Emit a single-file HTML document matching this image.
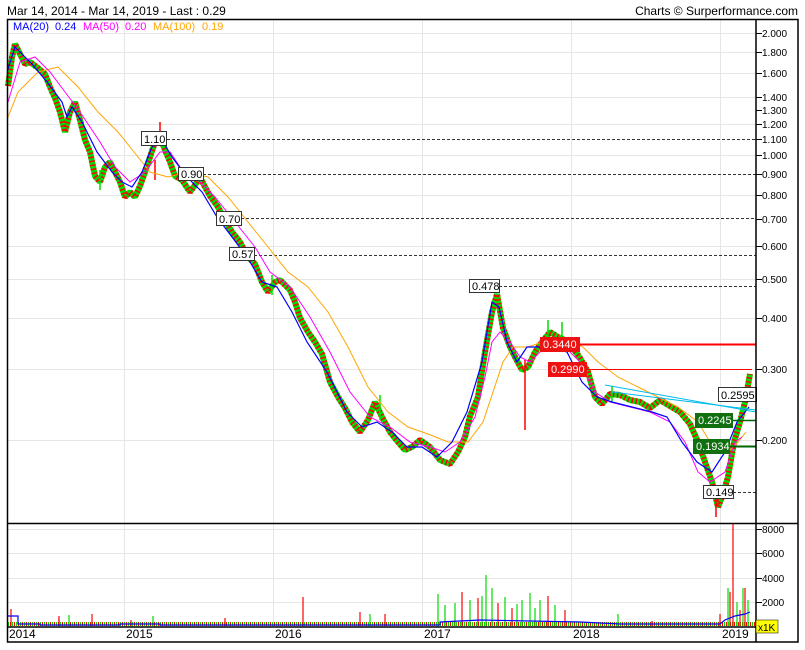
<!DOCTYPE html>
<html><head><meta charset="utf-8"><style>
html,body{margin:0;padding:0;background:#fff;width:805px;height:650px;overflow:hidden}
svg{display:block;font-family:"Liberation Sans",sans-serif}
</style></head><body>
<svg width="805" height="650" viewBox="0 0 805 650" xmlns="http://www.w3.org/2000/svg">
<rect width="805" height="650" fill="#fff"/>
<text x="7" y="15" font-size="12" fill="#000">Mar 14, 2014 - Mar 14, 2019 - Last : 0.29</text>
<text x="798" y="15" font-size="12" fill="#000" text-anchor="end">Charts © Surperformance.com</text>
<g stroke="#e6e6e6" stroke-width="1">
<line x1="124.5" y1="20" x2="124.5" y2="627"/><line x1="273.5" y1="20" x2="273.5" y2="627"/>
<line x1="422.5" y1="20" x2="422.5" y2="627"/><line x1="571.5" y1="20" x2="571.5" y2="627"/>
<line x1="720.5" y1="20" x2="720.5" y2="627"/>
<line x1="8" y1="33.5" x2="756" y2="33.5"/><line x1="8" y1="52.5" x2="756" y2="52.5"/>
<line x1="8" y1="73.5" x2="756" y2="73.5"/><line x1="8" y1="97.5" x2="756" y2="97.5"/>
<line x1="8" y1="124.5" x2="756" y2="124.5"/><line x1="8" y1="155.5" x2="756" y2="155.5"/>
<line x1="8" y1="195.5" x2="756" y2="195.5"/><line x1="8" y1="246.5" x2="756" y2="246.5"/>
<line x1="8" y1="279.5" x2="756" y2="279.5"/><line x1="8" y1="318.5" x2="756" y2="318.5"/>
<line x1="8" y1="369.5" x2="756" y2="369.5"/><line x1="8" y1="440.5" x2="756" y2="440.5"/>
<line x1="8" y1="529.5" x2="756" y2="529.5"/><line x1="8" y1="553.5" x2="756" y2="553.5"/>
<line x1="8" y1="578.5" x2="756" y2="578.5"/><line x1="8" y1="602.5" x2="756" y2="602.5"/>
</g>
<g stroke="#333" stroke-dasharray="3,2" stroke-width="1">
<line x1="167" y1="139.5" x2="756" y2="139.5"/><line x1="203" y1="174.5" x2="756" y2="174.5"/>
<line x1="241" y1="218.5" x2="756" y2="218.5"/><line x1="254" y1="255.5" x2="756" y2="255.5"/>
<line x1="499" y1="286.5" x2="756" y2="286.5"/><line x1="733" y1="492.5" x2="756" y2="492.5"/>
</g>
<!-- price -->
<g fill="none" transform="translate(0,2)" stroke-linejoin="bevel">
<polyline stroke="#00dd00" stroke-width="6" points="8,84 12,55 15,42 20,52 25,62 30,60 38,66 45,72 50,85 55,96 60,110 65,130 70,110 75,100 80,118 85,138 90,150 95,174 100,180 105,165 110,160 115,170 120,180 125,195 130,190 135,195 140,184 145,170 150,155 155,140 160,135 165,148 170,160 175,174 182,178 190,190 195,183 200,175 205,185 210,194 218,205 225,218 232,230 240,240 248,255 255,262 262,280 268,290 275,280 280,278 290,288 295,300 300,316 308,330 315,340 322,352 330,380 338,395 345,406 352,420 360,430 368,418 375,400 382,415 390,430 398,440 405,448 412,445 420,438 430,445 440,458 450,462 458,450 465,435 470,414 478,395 485,350 492,310 497,292 503,326 510,345 515,355 522,368 528,365 535,350 542,340 550,330 558,335 565,338 572,345 580,356 588,370 595,395 602,402 610,392 620,393 630,398 640,400 650,406 660,398 670,404 680,410 690,422 698,440 705,460 712,480 718,505 722,495 728,475 734,440 740,420 745,400 750,372"/>
<polyline stroke="#ff0000" stroke-width="6" stroke-dasharray="1.5,2.5" points="8,84 12,55 15,42 20,52 25,62 30,60 38,66 45,72 50,85 55,96 60,110 65,130 70,110 75,100 80,118 85,138 90,150 95,174 100,180 105,165 110,160 115,170 120,180 125,195 130,190 135,195 140,184 145,170 150,155 155,140 160,135 165,148 170,160 175,174 182,178 190,190 195,183 200,175 205,185 210,194 218,205 225,218 232,230 240,240 248,255 255,262 262,280 268,290 275,280 280,278 290,288 295,300 300,316 308,330 315,340 322,352 330,380 338,395 345,406 352,420 360,430 368,418 375,400 382,415 390,430 398,440 405,448 412,445 420,438 430,445 440,458 450,462 458,450 465,435 470,414 478,395 485,350 492,310 497,292 503,326 510,345 515,355 522,368 528,365 535,350 542,340 550,330 558,335 565,338 572,345 580,356 588,370 595,395 602,402 610,392 620,393 630,398 640,400 650,406 660,398 670,404 680,410 690,422 698,440 705,460 712,480 718,505 722,495 728,475 734,440 740,420 745,400 750,372"/>
</g>
<g stroke="#ff0000" stroke-width="1.5"><line x1="160" y1="122" x2="160" y2="140"/><line x1="525" y1="360" x2="525" y2="430"/><line x1="716" y1="495" x2="716" y2="517"/><line x1="155" y1="160" x2="155" y2="180"/></g>
<g stroke="#00dd00" stroke-width="1.5"><line x1="100" y1="170" x2="100" y2="190"/><line x1="272" y1="275" x2="272" y2="295"/><line x1="380" y1="395" x2="380" y2="420"/><line x1="548" y1="320" x2="548" y2="345"/><line x1="562" y1="322" x2="562" y2="345"/><line x1="612" y1="386" x2="612" y2="402"/></g>
<!-- MAs -->
<g fill="none" transform="translate(0,2)">
<polyline stroke="#ffa500" stroke-width="1" transform="translate(38,0)" points="-30,115 -20,90 0,70 20,65 40,85 60,110 80,130 100,155 112,170 130,175 150,170 170,175 190,195 210,220 230,245 250,270 270,285 290,310 310,345 330,385 350,410 370,425 390,432 410,440 430,440 445,420 455,390 465,360 475,345 490,345 510,338 530,338 545,345 560,360 580,375 600,385 620,395 640,405 660,420 675,445 690,450 700,440 708,430"/>
<polyline stroke="#ff00ff" stroke-width="1" transform="translate(20,0)" points="-12,100 0,60 15,55 30,70 45,90 60,110 80,140 95,165 110,180 125,170 140,150 150,150 160,165 175,175 195,195 215,220 235,245 250,270 270,285 290,315 310,350 330,390 350,415 370,425 390,440 410,445 425,450 440,440 455,415 465,375 472,340 480,330 490,340 500,355 510,360 525,345 545,345 560,360 575,390 590,400 610,405 630,410 650,420 665,440 678,470 690,480 705,470 715,440 722,435"/>
<polyline stroke="#0000ff" stroke-width="1.2" transform="translate(7,0)" points="0,70 8,45 15,52 25,62 40,80 55,100 60,115 65,105 75,120 90,150 105,170 115,180 125,185 135,170 145,145 155,138 165,155 180,175 195,190 210,215 225,235 240,255 255,280 270,285 285,310 300,340 320,370 340,410 355,425 370,420 385,430 400,445 415,445 430,455 445,440 460,410 475,360 485,300 492,305 500,340 510,360 520,345 530,345 545,345 560,350 575,380 590,395 605,400 625,405 645,410 660,415 675,440 690,460 705,470 718,450 730,420 742,405"/>
</g>
<g stroke="#00bbee" stroke-width="1"><line x1="605" y1="385" x2="756" y2="412"/><line x1="612" y1="392" x2="756" y2="410"/></g>
<line x1="580" y1="344.5" x2="756" y2="344.5" stroke="#ff0000" stroke-width="2"/>
<line x1="587" y1="369.5" x2="752" y2="369.5" stroke="#ff0000" stroke-width="1"/>
<line x1="733" y1="420.5" x2="756" y2="420.5" stroke="#006600" stroke-width="1.5"/>
<line x1="730" y1="446.5" x2="756" y2="446.5" stroke="#006600" stroke-width="2"/>
<g font-size="11">
<rect x="141.5" y="131.5" width="25" height="14" fill="#fff" stroke="#333"/><text x="144" y="143">1.10</text>
<rect x="178.5" y="167.5" width="25" height="13" fill="#fff" stroke="#333"/><text x="181" y="178">0.90</text>
<rect x="216.5" y="211.5" width="25" height="14" fill="#fff" stroke="#333"/><text x="219" y="223">0.70</text>
<rect x="229.5" y="247.5" width="25" height="13" fill="#fff" stroke="#333"/><text x="232" y="258">0.57</text>
<rect x="469.5" y="279.5" width="30" height="13" fill="#fff" stroke="#333"/><text x="472" y="290">0.478</text>
<rect x="540" y="337" width="40" height="15" fill="#ee1111"/><text x="543" y="348" fill="#fff">0.3440</text>
<rect x="548" y="362" width="39" height="15" fill="#ee1111"/><text x="551" y="373" fill="#fff">0.2990</text>
<rect x="718.5" y="387.5" width="38" height="14" fill="#fff" stroke="#333"/><text x="721" y="399">0.2595</text>
<rect x="695" y="413" width="38" height="15" fill="#107010"/><text x="698" y="424" fill="#fff">0.2245</text>
<rect x="693" y="439" width="37" height="15" fill="#107010"/><text x="696" y="450" fill="#fff">0.1934</text>
<rect x="703.5" y="485.5" width="30" height="13" fill="#fff" stroke="#333"/><text x="706" y="496">0.149</text>
</g>
<g font-size="11"><text x="13" y="30" fill="#0000ff">MA(20)</text><text x="55" y="30" fill="#0000ff">0.24</text>
<text x="83" y="30" fill="#ff00ff">MA(50)</text><text x="125" y="30" fill="#ff00ff">0.20</text>
<text x="153" y="30" fill="#ffa500">MA(100)</text><text x="202" y="30" fill="#ffa500">0.19</text></g>
<!-- volume -->
<line x1="8" y1="624" x2="755" y2="624" stroke="#00dd00" stroke-width="4" stroke-dasharray="1,3"/>
<line x1="10" y1="624" x2="755" y2="624" stroke="#ff0000" stroke-width="4" stroke-dasharray="1,3"/>
<g stroke-width="1.2">
<g stroke="#ff0000"><line x1="11" y1="626" x2="11" y2="609"/><line x1="59" y1="626" x2="59" y2="619"/><line x1="92" y1="626" x2="92" y2="614"/><line x1="131" y1="626" x2="131" y2="620"/><line x1="303" y1="626" x2="303" y2="597"/><line x1="462" y1="626" x2="462" y2="592"/><line x1="478" y1="626" x2="478" y2="598"/><line x1="498" y1="626" x2="498" y2="603"/><line x1="548" y1="626" x2="548" y2="596"/><line x1="652" y1="626" x2="652" y2="621"/><line x1="733" y1="626" x2="733" y2="524"/><line x1="730" y1="626" x2="730" y2="592"/><line x1="745" y1="626" x2="745" y2="588"/><line x1="720" y1="626" x2="720" y2="614"/><line x1="740" y1="626" x2="740" y2="610"/><line x1="59" y1="626" x2="59" y2="616"/><line x1="225" y1="626" x2="225" y2="618"/><line x1="360" y1="626" x2="360" y2="612"/><line x1="385" y1="626" x2="385" y2="614"/><line x1="512" y1="626" x2="512" y2="608"/><line x1="565" y1="626" x2="565" y2="610"/></g>
<g stroke="#00dd00"><line x1="69" y1="626" x2="69" y2="615"/><line x1="153" y1="626" x2="153" y2="616"/><line x1="438" y1="626" x2="438" y2="594"/><line x1="486" y1="626" x2="486" y2="575"/><line x1="470" y1="626" x2="470" y2="600"/><line x1="492" y1="626" x2="492" y2="588"/><line x1="505" y1="626" x2="505" y2="597"/><line x1="517" y1="626" x2="517" y2="604"/><line x1="530" y1="626" x2="530" y2="593"/><line x1="540" y1="626" x2="540" y2="600"/><line x1="555" y1="626" x2="555" y2="605"/><line x1="618" y1="626" x2="618" y2="614"/><line x1="728" y1="626" x2="728" y2="588"/><line x1="743" y1="626" x2="743" y2="588"/><line x1="748" y1="626" x2="748" y2="600"/><line x1="737" y1="626" x2="737" y2="602"/><line x1="445" y1="626" x2="445" y2="605"/><line x1="455" y1="626" x2="455" y2="603"/><line x1="482" y1="626" x2="482" y2="596"/><line x1="522" y1="626" x2="522" y2="600"/><line x1="535" y1="626" x2="535" y2="608"/><line x1="370" y1="626" x2="370" y2="614"/></g>
</g>
<polyline fill="none" stroke="#0000ff" stroke-width="1.2" points="8,616 18,616 18,624 40,624 40,625 120,625 120,624 160,624 160,625 440,625 440,622 480,620 530,621 580,622 620,624 720,624 725,620 735,616 745,614 750,612"/>
<g fill="none" stroke="#000" stroke-width="1.5">
<rect x="7.5" y="19.5" width="790.5" height="622.5"/>
<line x1="756" y1="19" x2="756" y2="642"/>
<line x1="7" y1="523.5" x2="798" y2="523.5"/>
<line x1="7" y1="627" x2="756" y2="627"/>
</g>
<g stroke="#000" stroke-width="1">
<line x1="756" y1="33.5" x2="762" y2="33.5"/><line x1="756" y1="52.5" x2="762" y2="52.5"/><line x1="756" y1="73.5" x2="762" y2="73.5"/><line x1="756" y1="97.5" x2="762" y2="97.5"/><line x1="756" y1="110.5" x2="762" y2="110.5"/><line x1="756" y1="124.5" x2="762" y2="124.5"/><line x1="756" y1="139.5" x2="762" y2="139.5"/><line x1="756" y1="155.5" x2="762" y2="155.5"/><line x1="756" y1="174.5" x2="762" y2="174.5"/><line x1="756" y1="195.5" x2="762" y2="195.5"/><line x1="756" y1="219.5" x2="762" y2="219.5"/><line x1="756" y1="246.5" x2="762" y2="246.5"/><line x1="756" y1="279.5" x2="762" y2="279.5"/><line x1="756" y1="318.5" x2="762" y2="318.5"/><line x1="756" y1="369.5" x2="762" y2="369.5"/><line x1="756" y1="440.5" x2="762" y2="440.5"/>
<line x1="756" y1="529.5" x2="762" y2="529.5"/><line x1="756" y1="553.5" x2="762" y2="553.5"/><line x1="756" y1="578.5" x2="762" y2="578.5"/><line x1="756" y1="602.5" x2="762" y2="602.5"/>
</g>
<g font-size="10" fill="#000">
<text x="762" y="37">2.000</text><text x="762" y="56">1.800</text><text x="762" y="77">1.600</text><text x="762" y="101">1.400</text><text x="762" y="114">1.300</text><text x="762" y="128">1.200</text><text x="762" y="143">1.100</text><text x="762" y="159">1.000</text><text x="762" y="178">0.900</text><text x="762" y="199">0.800</text><text x="762" y="223">0.700</text><text x="762" y="250">0.600</text><text x="762" y="283">0.500</text><text x="762" y="322">0.400</text><text x="762" y="373">0.300</text><text x="762" y="444">0.200</text>
<text x="762" y="533">8000</text><text x="762" y="557">6000</text><text x="762" y="582">4000</text><text x="762" y="606">2000</text>
</g>
<rect x="756" y="620" width="22" height="13" fill="#ffff00" stroke="#000" stroke-width="0.5"/>
<text x="758" y="631" font-size="10">x1K</text>
<g font-size="12" fill="#000"><text x="9" y="638">2014</text><text x="126" y="638">2015</text><text x="275" y="638">2016</text><text x="424" y="638">2017</text><text x="573" y="638">2018</text><text x="722" y="638">2019</text></g>
</svg>
</body></html>
